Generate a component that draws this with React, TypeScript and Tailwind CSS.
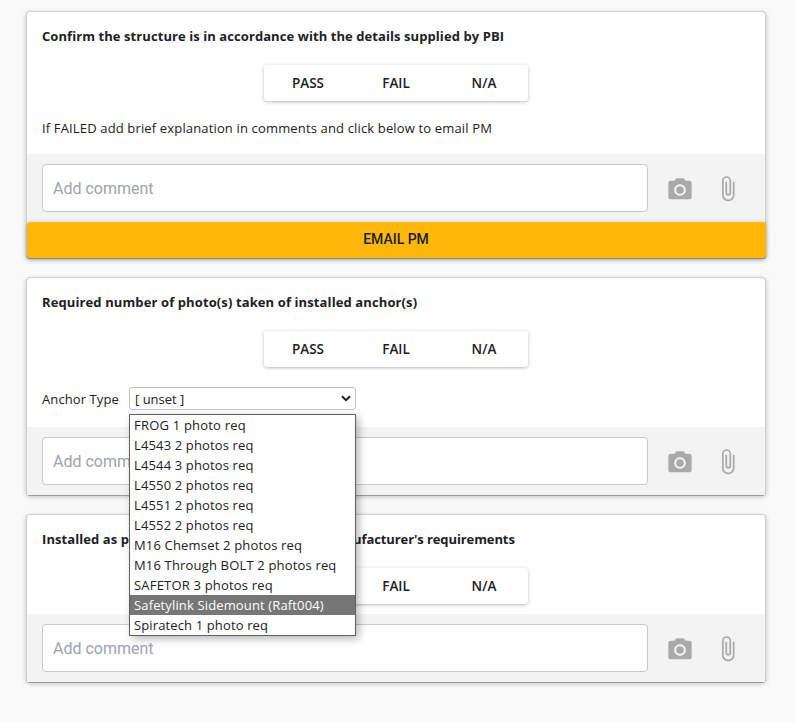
import type { ReactNode } from "react";
import { MdAttachFile, MdCameraAlt } from "react-icons/md";

const anchorTypes = [
  { label: "FROG 1 photo req", track: "tracking-[0.2px]" },
  { label: "L4543 2 photos req", track: "tracking-[0.14px]" },
  { label: "L4544 3 photos req", track: "tracking-[0.14px]" },
  { label: "L4550 2 photos req", track: "tracking-[0.14px]" },
  { label: "L4551 2 photos req", track: "tracking-[0.14px]" },
  { label: "L4552 2 photos req", track: "tracking-[0.14px]" },
  { label: "M16 Chemset 2 photos req", track: "tracking-[0.17px]" },
  { label: "M16 Through BOLT 2 photos req", track: "tracking-[0.17px]" },
  { label: "SAFETOR 3 photos req", track: "tracking-[0.19px]" },
  { label: "Safetylink Sidemount (Raft004)", track: "tracking-[0.14px]", active: true },
  { label: "Spiratech 1 photo req", track: "tracking-[0.13px]" },
];

function ResultButtons() {
  return (
    <div className="mx-auto mt-[16px] flex w-[264px] rounded-[3px] bg-white text-[13.5px] font-semibold shadow-[0_1px_4px_rgba(0,0,0,0.2),0_1px_2px_rgba(0,0,0,0.1)]">
      {["PASS", "FAIL", "N/A"].map((label) => (
        <button key={label} className="h-9 w-[88px]">
          {label}
        </button>
      ))}
    </div>
  );
}

function CommentBar() {
  return (
    <div className="flex h-[68px] items-center bg-[#f3f3f3] pl-[15px] text-[#a9a9a9]">
      <div className="flex h-12 w-[606px] items-center rounded-[4px] border border-[#c8c8c8] bg-white pt-[2px] pl-[10px] font-['Roboto',sans-serif] text-[16px] text-[#9ea3ad]">
        Add comment
      </div>
      <MdCameraAlt className="mt-[3px] ml-[18px] size-7" />
      <MdAttachFile className="mt-px ml-5 size-[27.4px]" />
    </div>
  );
}

function Card({ title, track, children, footer }: { title: ReactNode; track: string; children?: ReactNode; footer?: ReactNode }) {
  return (
    <section className="rounded-[4px] border border-b-0 border-[#d0d0d0] bg-white shadow-[0_1px_0_#9b9b9b,0_2px_4px_rgba(0,0,0,0.16),0_1px_6px_rgba(0,0,0,0.08)]">
      <h2 className={`pl-[15px] pt-[14px] text-[13px] leading-[21px] font-bold whitespace-nowrap ${track}`}>{title}</h2>
      <div className="pt-[2px]">
        <ResultButtons />
      </div>
      {children}
      <CommentBar />
      {footer}
    </section>
  );
}

function AnchorSelect() {
  return (
    <div className="relative ml-[10px] w-[227px]">
      <div className="flex h-[23px] items-center rounded-[3px] border border-[#c4c4c4] bg-white pl-[5px]">
        <span className="pt-px">[ unset ]</span>
        <svg className="ml-auto mr-[4px]" width="10" height="7" viewBox="0 0 10 7" fill="none" stroke="#1d2125" strokeWidth="2">
          <path d="M1 1.2 5 5.2 9 1.2" />
        </svg>
      </div>
      <ul className="absolute left-0 top-[27px] z-10 w-[227px] border border-[#606060] bg-white shadow-[3px_3px_8px_rgba(0,0,0,0.28)]">
        {anchorTypes.map(({ label, track, active }) => (
          <li key={label} className={`h-5 pl-1 leading-5 whitespace-nowrap ${track} ${active ? "bg-[#767676] text-white" : ""}`}>
            {label}
          </li>
        ))}
      </ul>
    </div>
  );
}

export default function App() {
  return (
    <main className="flex min-h-screen flex-col gap-[19px] bg-[#f9f9f9] pt-[11px] pr-[30px] pl-[26px] font-['Open_Sans',sans-serif] text-[13px] text-[#1d2125]">
      <Card
        title="Confirm the structure is in accordance with the details supplied by PBI"
        track="tracking-[0.075px]"
        footer={
          <button className="-mr-px block h-9 w-[739px] rounded-[3px] bg-[#ffb80a] pr-px pb-[2px] font-['Roboto',sans-serif] text-[14px] font-medium shadow-[0_1px_0_#8e8e8e,0_1px_4px_rgba(0,0,0,0.25)]">
            EMAIL PM
          </button>
        }
      >
        <p className="h-[53px] pl-[15px] pt-[17px] leading-[20px] tracking-[0.15px] whitespace-nowrap">
          If FAILED add brief explanation in comments and click below to email PM
        </p>
      </Card>
      <Card title="Required number of photo(s) taken of installed anchor(s)" track="tracking-[0.11px]">
        <div className="flex h-[60px] pl-[15px] pt-5 leading-[23px]">
          <span className="w-[77px] pt-px tracking-[0.1px] whitespace-nowrap">Anchor Type</span>
          <AnchorSelect />
        </div>
      </Card>
      <Card
        title={
          <>
            Installed as per <span className="tracking-[0.24px]">PBI specifications and the man</span>
            <span className="tracking-[-0.1px]">ufacturer's requirements</span>
          </>
        }
        track="tracking-[0.08px]"
      >
        <div className="h-[10px]" />
      </Card>
    </main>
  );
}
